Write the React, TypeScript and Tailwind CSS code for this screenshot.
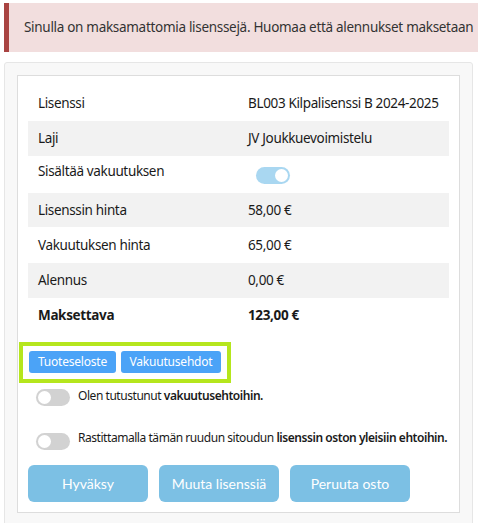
import React from "react";

const rows: { label: string; value: string; shaded: boolean; bold?: boolean; toggle?: boolean; h: string }[] = [
  { label: "Lisenssi", value: "BL003 Kilpalisenssi B 2024-2025", shaded: false, h: "h-[35px]" },
  { label: "Laji", value: "JV Joukkuevoimistelu", shaded: true, h: "h-[35px]" },
  { label: "Sisältää vakuutuksen", value: "", shaded: false, toggle: true, h: "h-[37px]" },
  { label: "Lisenssin hinta", value: "58,00 €", shaded: true, h: "h-[34px]" },
  { label: "Vakuutuksen hinta", value: "65,00 €", shaded: false, h: "h-[36px]" },
  { label: "Alennus", value: "0,00 €", shaded: true, h: "h-[35px]" },
  { label: "Maksettava", value: "123,00 €", shaded: false, bold: true, h: "h-[35px]" },
];

function Switch({ on }: { on: boolean }) {
  return (
    <div
      className={
        "w-[34px] h-[17px] rounded-full flex items-center px-[2px] shrink-0 " +
        (on ? "bg-[#a9d7f1] justify-end" : "bg-[#d2d2d2] justify-start")
      }
    >
      <div className="w-[13px] h-[13px] rounded-full bg-white" />
    </div>
  );
}

export default function App() {
  return (
    <div
      className="w-[478px] h-[523px] overflow-hidden bg-white text-[#1a1a1a] tracking-[-0.35px]"
      style={{ fontFamily: '"Noto Sans", "Open Sans", sans-serif' }}
    >
      <div className="pt-[3px] pl-[4px]">
        <div className="h-[49px] w-[474px] bg-[#f2dede] border-l-[5px] border-[#a94442] flex items-center pl-[15px] pb-[1px] text-[13.5px] tracking-[-0.3px] text-[#333] whitespace-nowrap overflow-hidden">
          Sinulla on maksamattomia lisenssejä. Huomaa että alennukset maksetaan
        </div>
      </div>

      <div className="mt-[10px] ml-[4px] w-[469px] h-[470px] bg-[#f8f8f8] border border-[#e6e6e6] rounded-[3px] p-[12px]">
        <div className="bg-white border border-[#dddddd] p-[10px] pb-[10px]">
          <div className="flex flex-col text-[13.5px]">
            {rows.map((r) => (
              <div
                key={r.label}
                className={
                  "flex items-center whitespace-nowrap " + r.h + " " + (r.shaded ? "bg-[#f2f2f2]" : "bg-white") + (r.bold ? " font-bold" : "")
                }
              >
                <div className={"w-[220px] pl-[10px] " + (r.toggle ? "-mt-[6px]" : "")}>{r.label}</div>
                {r.toggle ? (
                  <div className="pl-[8px] mt-[2px]">
                    <Switch on={true} />
                  </div>
                ) : (
                  <div>{r.value}</div>
                )}
              </div>
            ))}
          </div>

          <div className="relative mt-[18px] ml-[1px] flex gap-[5px] tracking-[-0.2px]">
            <div className="absolute left-[-10px] top-[-9px] w-[212px] h-[41px] border-[4px] border-[#b5e61d]" />
            <button className="h-[22px] w-[87px] rounded-[3px] bg-[#4ba3f7] text-white text-[12px] flex items-center justify-center">
              Tuoteseloste
            </button>
            <button className="h-[22px] w-[100px] rounded-[3px] bg-[#4ba3f7] text-white text-[12px] flex items-center justify-center">
              Vakuutusehdot
            </button>
          </div>

          <div className="mt-[16px] ml-[8px] flex items-start gap-[8px] text-[12px] tracking-[-0.45px] whitespace-nowrap">
            <Switch on={false} />
            <div className="-mt-[2px]">
              Olen tutustunut <span className="font-semibold">vakuutusehtoihin.</span>
            </div>
          </div>

          <div className="mt-[27px] ml-[8px] flex items-start gap-[8px] text-[12px] tracking-[-0.45px] whitespace-nowrap">
            <Switch on={false} />
            <div className="-mt-[4px]">
              Rastittamalla tämän ruudun sitoudun <span className="font-semibold">lisenssin oston yleisiin ehtoihin.</span>
            </div>
          </div>

          <div className="mt-[15px] flex gap-[11px] tracking-normal" style={{ fontFamily: 'Lato, "Noto Sans", sans-serif' }}>
            {["Hyväksy", "Muuta lisenssiä", "Peruuta osto"].map((t) => (
              <button
                key={t}
                className="h-[37px] w-[120px] rounded-[6px] bg-[#7cc0e4] text-white text-[14px] flex items-center justify-center"
              >
                {t}
              </button>
            ))}
          </div>
        </div>
      </div>
    </div>
  );
}
